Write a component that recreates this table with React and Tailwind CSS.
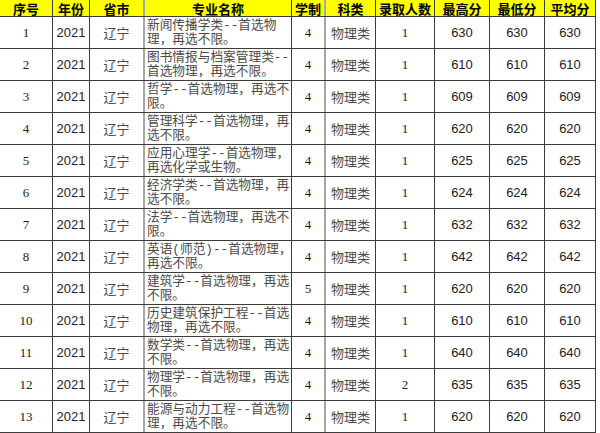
import React from 'react';

const rows = [
  ['1', '4', '1', '630', '630', '630', ['新闻传播学类--首选物', '理，再选不限。']],
  ['2', '4', '1', '610', '610', '610', ['图书情报与档案管理类--', '首选物理，再选不限。']],
  ['3', '4', '1', '609', '609', '609', ['哲学--首选物理，再选不', '限。']],
  ['4', '4', '1', '620', '620', '620', ['管理科学--首选物理，再', '选不限。']],
  ['5', '4', '1', '625', '625', '625', ['应用心理学--首选物理，', '再选化学或生物。']],
  ['6', '4', '1', '624', '624', '624', ['经济学类--首选物理，再', '选不限。']],
  ['7', '4', '1', '632', '632', '632', ['法学--首选物理，再选不', '限。']],
  ['8', '4', '1', '642', '642', '642', ['英语(师范)--首选物理，', '再选不限。']],
  ['9', '5', '1', '620', '620', '620', ['建筑学--首选物理，再选', '不限。']],
  ['10', '4', '1', '610', '610', '610', ['历史建筑保护工程--首选', '物理，再选不限。']],
  ['11', '4', '1', '640', '640', '640', ['数学类--首选物理，再选', '不限。']],
  ['12', '4', '2', '635', '635', '635', ['物理学--首选物理，再选', '不限。']],
  ['13', '4', '1', '620', '620', '620', ['能源与动力工程--首选物', '理，再选不限。']],
];

const headers = ['序号', '年份', '省市', '专业名称', '学制', '科类', '录取人数', '最高分', '最低分', '平均分'];

const cjk = "font-['Noto_Sans_CJK_SC',sans-serif]";
const serif = "font-['Liberation_Serif','Noto_Sans_CJK_SC',serif]";
const sans = "font-['Liberation_Sans',Arial,sans-serif]";
const major = "font-['Liberation_Mono','Noto_Sans_CJK_SC',monospace]";

// right border per column: thin dark, except the two gray double-width ones
const rb = [
  'border-r border-[#3c3c3c]',
  'border-r border-[#3c3c3c]',
  'border-r-2 border-[#a6a6a6]',
  'border-r border-[#3c3c3c]',
  'border-r-2 border-[#a6a6a6]',
  'border-r border-[#3c3c3c]',
  'border-r border-[#3c3c3c]',
  'border-r border-[#3c3c3c]',
  'border-r border-[#3c3c3c]',
  'border-r border-[#3c3c3c]',
];

const grid = 'grid grid-cols-[53px_37px_55px_147px_34px_50px_59px_55px_55px_51px]';

export default function App() {
  return (
    <div className="w-[600px] h-[433px] bg-white overflow-hidden">
      <div className={`${grid} h-[17px] bg-[#ffff00] border-b border-[#3c3c3c] w-[596px]`}>
        {headers.map((h, i) => (
          <div
            key={h}
            className={`${rb[i]} ${cjk} flex items-center justify-center text-[13px] leading-[15px] font-bold text-black whitespace-nowrap`}
          >
            {h}
          </div>
        ))}
      </div>

      {rows.map(([no, years, count, hi, lo, avg, name]) => (
        <div key={no} className={`${grid} h-[32px] border-b border-[#3c3c3c] w-[596px]`}>
          <div className={`${rb[0]} ${serif} flex items-center justify-center text-[13px] text-[#222]`}>{no}</div>
          <div className={`${rb[1]} ${sans} flex items-center justify-center text-[13px] text-[#222]`}>2021</div>
          <div className={`${rb[2]} ${cjk} flex items-center justify-center text-[13px] text-[#4a4a4a]`}>辽宁</div>
          <div className={`${rb[3]} ${major} flex flex-col justify-center pl-[2px] text-[12.7px] leading-[14px] text-[#4a4a4a] whitespace-nowrap overflow-hidden`}>
            <span>{name[0]}</span>
            <span>{name[1]}</span>
          </div>
          <div className={`${rb[4]} ${serif} flex items-center justify-center text-[13px] text-[#222]`}>{years}</div>
          <div className={`${rb[5]} ${cjk} flex items-center justify-center text-[13px] text-[#4a4a4a]`}>物理类</div>
          <div className={`${rb[6]} ${serif} flex items-center justify-center text-[13px] text-[#222]`}>{count}</div>
          <div className={`${rb[7]} ${sans} flex items-center justify-center text-[13px] text-[#222]`}>{hi}</div>
          <div className={`${rb[8]} ${sans} flex items-center justify-center text-[13px] text-[#222]`}>{lo}</div>
          <div className={`${rb[9]} ${sans} flex items-center justify-center text-[13px] text-[#222]`}>{avg}</div>
        </div>
      ))}
    </div>
  );
}
